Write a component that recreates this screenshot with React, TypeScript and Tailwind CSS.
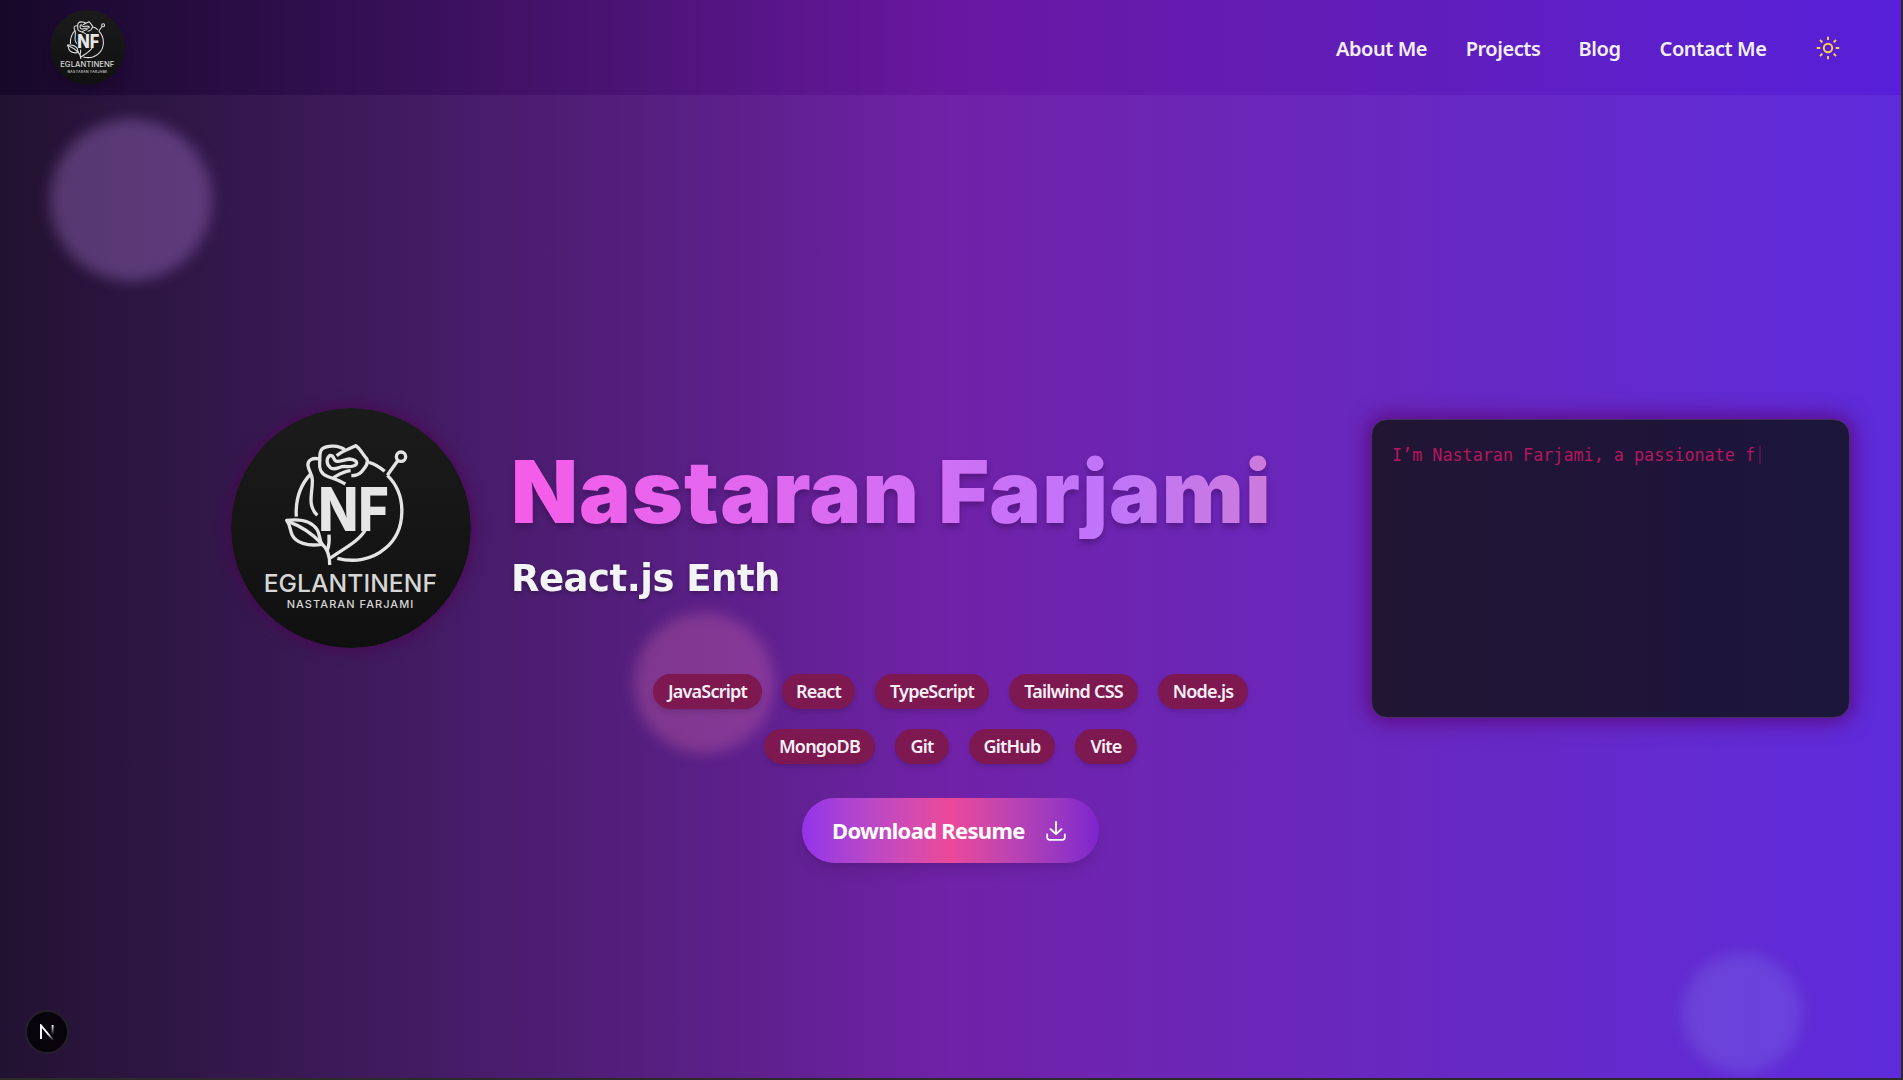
const NAV_LINKS = [
  { label: "About Me", width: "w-[91px]" },
  { label: "Projects", width: "w-[72px]" },
  { label: "Blog", width: "w-[41px]" },
  { label: "Contact Me", width: "w-[106px]" },
];

const SKILL_ROWS = [
  [
    { label: "JavaScript", width: "w-[109px]" },
    { label: "React", width: "w-[73px]" },
    { label: "TypeScript", width: "w-[114px]" },
    { label: "Tailwind CSS", width: "w-[129px]" },
    { label: "Node.js", width: "w-[90px]" },
  ],
  [
    { label: "MongoDB", width: "w-[111px]" },
    { label: "Git", width: "w-[54px]" },
    { label: "GitHub", width: "w-[86px]" },
    { label: "Vite", width: "w-[62px]" },
  ],
];

function Logo({ className }: { className: string }) {
  return (
    <svg viewBox="33 24 720 720" className={className} role="img" aria-label="Eglantinenf logo">
      <defs>
        <linearGradient id="disc" x1="0" y1="0" x2="0" y2="1">
          <stop offset="0" stopColor="#1b1b1b" />
          <stop offset="1" stopColor="#101010" />
        </linearGradient>
      </defs>
      <circle cx="393" cy="384" r="360" fill="url(#disc)" />
      <g fill="none" stroke="#e4e4e4" strokeWidth="10" strokeLinejoin="round">
        <path d="M229 350C226 300 238 258 272 222" />
        <path d="M447 187C464 192 480 202 494 214" />
        <path d="M502 226C562 284 560 392 496 445C455 481 400 487 352 475" />
        <path d="M502 226L533 182" />
        <circle cx="543" cy="170" r="14" />
        <path d="M298 177C278 172 262 180 264 197C266 212 276 220 277 240C278 268 270 290 274 312C277 328 283 338 292 346" />
        <path d="M374 149C358 136 322 134 306 147C296 158 301 172 299 188C297 206 304 222 320 228C340 236 356 240 376 252" />
        <path d="M350 167C365 154 385 148 407 137C422 147 427 162 440 176C448 190 434 204 424 216C416 224 407 227 394 227" />
        <path d="M330 166C318 176 319 192 330 202C340 212 352 204 366 200C380 198 398 204 408 194C414 184 402 178 388 177C366 180 348 192 342 176C340 170 336 166 330 166Z" />
        <path d="M340 233C356 224 370 214 392 212" />
        <path d="M200 361C240 356 276 364 292 390C300 404 298 420 306 433C262 440 228 428 216 404C210 390 210 374 200 361Z" />
        <path d="M204 364C242 378 276 400 304 430C322 446 330 466 329 495" />
        <path d="M327 404C329 426 326 440 322 452" />
        <path d="M331 474C370 446 418 424 438 386" />
      </g>
      <g fill="#e6e6e6" fontFamily="Inter, sans-serif">
        <text x="295" y="393" fontSize="182" fontWeight="800" textLength="212" lengthAdjust="spacingAndGlyphs">
          NF
        </text>
        <text x="131" y="575" fontSize="74" fontWeight="500" textLength="520" fill="#d6d6d6" lengthAdjust="spacing">
          EGLANTINENF
        </text>
        <text x="200" y="624" fontSize="33" fontWeight="500" textLength="380" fill="#d6d6d6" lengthAdjust="spacing">
          NASTARAN FARJAMI
        </text>
      </g>
    </svg>
  );
}

function SunIcon() {
  return (
    <svg viewBox="0 0 24 24" className="size-6 text-[#fcd34d]" fill="none" stroke="currentColor" strokeWidth="1.9">
      <circle cx="12" cy="12" r="4.2" />
      <path d="M12 .7v3.4M12 19.9v3.4M.7 12h3.6M19.7 12h3.6M4 4l2.3 2.3M17.7 17.7L20 20M4 20l2.3-2.3M17.7 6.3L20 4" />
    </svg>
  );
}

function DownloadIcon() {
  return (
    <svg viewBox="0 0 20 20" className="size-5" fill="none" stroke="currentColor" strokeWidth="1.8" strokeLinecap="round" strokeLinejoin="round">
      <path d="M1.2 13.4v3.2a2.2 2.2 0 0 0 2.2 2.2h13.2a2.2 2.2 0 0 0 2.2-2.2v-3.2M4.4 8l5.6 5.2L15.6 8M10 13.2V1" />
    </svg>
  );
}

function Header() {
  return (
    <header className="flex h-[95px] items-center justify-between bg-linear-to-r from-[#170829] via-[#6917a1] to-[#571fd9] pr-[61px] pl-[50px]">
      <Logo className="size-[75px] rounded-full shadow-lg" />
      <nav className="flex items-center gap-10 text-[20px] font-semibold text-[#f3f0fb]">
        {NAV_LINKS.map((link) => (
          <a key={link.label} className={`${link.width} flex justify-center pt-0.5 tracking-[-0.45px] whitespace-nowrap`}>
            {link.label}
          </a>
        ))}
        <button className="ml-2.5" aria-label="Toggle theme">
          <SunIcon />
        </button>
      </nav>
    </header>
  );
}

export default function App() {
  return (
    <div className="h-[1080px] w-[1903px] overflow-hidden bg-[#2b2b2b] pr-0.5 pb-0.5 font-['Noto_Sans',sans-serif]">
      <div className="relative isolate h-full overflow-hidden bg-linear-to-r from-[#221231] via-[#7022a8] to-[#5e2bdc]">
        <div className="absolute top-[119px] left-[50px] -z-10 size-[162px] rounded-full bg-[#c68ff5]/30 blur-[7px]" />
        <div className="absolute top-[613px] left-[634px] -z-10 size-[140px] rounded-full bg-[#e072b0]/30 blur-[7px]" />
        <div className="absolute top-[953px] left-[1682px] -z-10 size-[120px] rounded-full bg-[#93a0fa]/20 blur-[7px]" />

        <Header />

        <main className="flex items-start pt-[313px] pl-[231px]">
          <Logo className="size-[240px] shrink-0 rounded-full shadow-[0_0_14px_2px_rgba(80,0,80,0.7)]" />

          <section className="ml-10 flex w-[860px] shrink-0 flex-col pt-9">
            <h1 className="w-[830px] bg-linear-to-r from-[#f65ce8] via-[#bf75fa] via-72% to-[#d27bcb] bg-clip-text font-['Inter',sans-serif] text-[87px] leading-[95px] font-black tracking-[1px] whitespace-nowrap text-transparent drop-shadow-[0_4px_3px_rgba(40,0,60,0.35)]">
              Nastaran Farjami
            </h1>
            <h2 className="mt-[18px] font-['DejaVu_Sans',sans-serif] text-[37px] leading-[44px] font-bold tracking-[-0.5px] whitespace-nowrap text-gray-100 drop-shadow-[0_2px_2px_rgba(0,0,0,0.3)]">
              React.js Enth
            </h2>

            <div className="mt-[73px] flex w-[879px] flex-col items-center gap-5">
              {SKILL_ROWS.map((row, i) => (
                <ul key={i} className="flex gap-5">
                  {row.map((skill) => (
                    <li
                      key={skill.label}
                      className={`${skill.width} flex h-[35px] items-center justify-center rounded-full bg-[#7d1850] text-[18px] font-semibold tracking-[-0.8px] whitespace-nowrap text-[#f8f0f6] shadow-md`}
                    >
                      {skill.label}
                    </li>
                  ))}
                </ul>
              ))}
            </div>

            <button className="mt-[34px] ml-[291px] flex h-[65px] w-[297px] items-center justify-between rounded-full bg-linear-to-r from-[#9333ea] via-[#ec4899] to-[#7e22ce] pr-[33px] pl-[30px] text-[22px] font-bold tracking-[-0.7px] whitespace-nowrap text-white shadow-lg">
              Download Resume
              <DownloadIcon />
            </button>
          </section>

          <aside className="mt-[11px] flex h-[299px] w-[479px] shrink-0 items-start rounded-2xl border border-[#45305f] bg-linear-to-r from-[#211533] via-[#1e1538] to-[#1c163b] py-[23px] pl-5 font-['DejaVu_Sans_Mono',monospace] text-[16.75px] leading-[24px] whitespace-nowrap text-[#b5175e] shadow-[0_0_20px_4px_rgba(90,0,110,0.75)]">
            <p>I’m Nastaran Farjami, a passionate f</p>
            <span className="mt-[3px] ml-1 h-[18px] w-[2px] bg-[#4d1748]" />
          </aside>
        </main>

        <div className="absolute top-[1010px] left-[25px] flex size-11 items-center justify-center rounded-full border-2 border-[#26202b] bg-[#07040b]">
          <svg viewBox="0 0 16 16" className="size-4" fill="none" strokeWidth="1.9">
            <defs>
              <linearGradient id="mark-diagonal" gradientUnits="userSpaceOnUse" x1="9" y1="9" x2="15" y2="16">
                <stop stopColor="#fff" />
                <stop offset="1" stopColor="#fff" stopOpacity="0" />
              </linearGradient>
              <linearGradient id="mark-stem" gradientUnits="userSpaceOnUse" x1="0" y1="1" x2="0" y2="11">
                <stop stopColor="#fff" />
                <stop offset="1" stopColor="#fff" stopOpacity="0" />
              </linearGradient>
            </defs>
            <path d="M2 15V1.5L14.6 16.6" stroke="url(#mark-diagonal)" />
            <path d="M13.6 1v10" stroke="url(#mark-stem)" />
          </svg>
        </div>
      </div>
    </div>
  );
}
